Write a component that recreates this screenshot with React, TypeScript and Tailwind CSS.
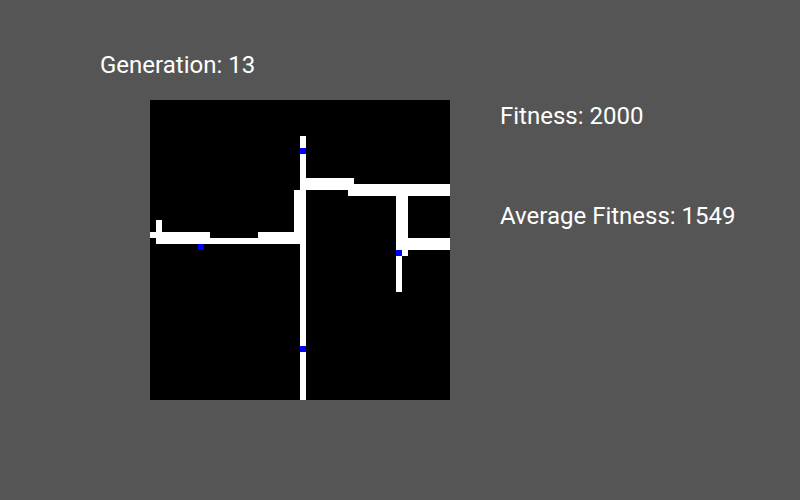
import React from "react";

const whites: [number, number, number, number][] = [
  [150, 36, 6, 264],
  [144, 90, 6, 54],
  [156, 78, 48, 12],
  [198, 84, 102, 12],
  [246, 96, 12, 54],
  [252, 150, 6, 6],
  [246, 156, 6, 36],
  [258, 138, 42, 12],
  [0, 132, 60, 6],
  [6, 120, 6, 12],
  [6, 138, 144, 6],
  [108, 132, 36, 6],
];

const blues: [number, number][] = [
  [150, 48],
  [48, 144],
  [246, 150],
  [150, 246],
];

export default function App() {
  return (
    <div className="w-[800px] h-[500px] bg-[#555555] text-white font-['Roboto',sans-serif] text-[24px] leading-[24px] pt-[53px] overflow-hidden">
      <div className="pl-[100px] h-[24px]">Generation: 13</div>
      <div className="flex mt-[23px] pl-[150px]">
        <svg width="300" height="300" viewBox="0 0 300 300" className="block shrink-0" shapeRendering="crispEdges">
          <rect x="0" y="0" width="300" height="300" fill="#000" />
          {whites.map(([x, y, w, h], i) => (
            <rect key={i} x={x} y={y} width={w} height={h} fill="#fff" />
          ))}
          {blues.map(([x, y], i) => (
            <rect key={"b" + i} x={x} y={y} width={6} height={6} fill="#0000ff" />
          ))}
        </svg>
        <div className="ml-[50px] pt-[4px] flex flex-col gap-[76px]">
          <div className="h-[24px]">Fitness: 2000</div>
          <div className="h-[24px]">Average Fitness: 1549</div>
        </div>
      </div>
    </div>
  );
}
